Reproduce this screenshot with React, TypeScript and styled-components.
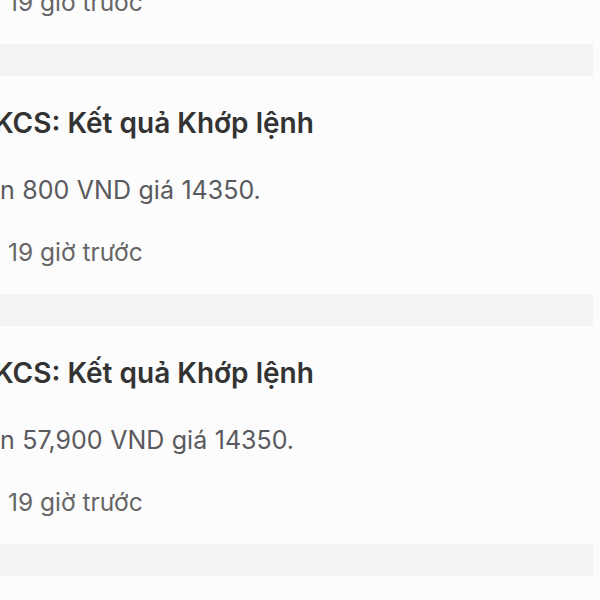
import React from "react";
import styled, { createGlobalStyle } from "styled-components";

const Global = createGlobalStyle`
  html, body { margin: 0; padding: 0; background: #fcfcfc; }
  body { width: 600px; height: 600px; overflow: hidden; font-family: Inter, "Noto Sans", sans-serif; }
`;

const Screen = styled.div`
  width: 600px;
  height: 600px;
  overflow: hidden;
  background: #fcfcfc;
  display: flex;
  align-items: flex-start;
`;

const List = styled.div`
  width: 593px;
  margin-top: -14px;
  display: flex;
  flex-direction: column;
  flex-shrink: 0;
`;

const Card = styled.div<{ $tail?: boolean }>`
  height: ${(p) => (p.$tail ? "58px" : "218px")};
  flex-shrink: 0;
  background: #fcfcfc;
  display: flex;
  flex-direction: column;
  overflow: hidden;
  padding-top: ${(p) => (p.$tail ? "0" : "30px")};
  box-sizing: border-box;
`;

const Separator = styled.div`
  height: 32px;
  flex-shrink: 0;
  background: #f3f3f3;
`;

const Title = styled.div`
  font-size: 28px;
  font-weight: 600;
  color: #333333;
  line-height: 34px;
  margin-left: -6px;
  white-space: nowrap;
`;

const Body = styled.div`
  font-size: 25px;
  font-weight: 400;
  color: #5a5a5e;
  line-height: 32px;
  margin-top: 34px;
  white-space: nowrap;
  word-spacing: 0.5px;
`;

const Time = styled.div<{ $tail?: boolean }>`
  font-size: 24.5px;
  font-weight: 400;
  color: #666666;
  line-height: 32px;
  margin-top: ${(p) => (p.$tail ? "0" : "30px")};
  margin-left: 8px;
  white-space: nowrap;
`;

const items = [
  { body: "n 800 VND giá 14350." },
  { body: "n 57,900 VND giá 14350." },
];

export default function App() {
  return (
    <>
      <Global />
      <Screen>
        <List>
          <Card $tail>
            <Time $tail>19 giờ trước</Time>
          </Card>
          <Separator />
          {items.map((it, i) => (
            <React.Fragment key={i}>
              <Card>
                <Title>KCS: Kết quả Khớp lệnh</Title>
                <Body>{it.body}</Body>
                <Time>19 giờ trước</Time>
              </Card>
              <Separator />
            </React.Fragment>
          ))}
          <Card />
        </List>
      </Screen>
    </>
  );
}
